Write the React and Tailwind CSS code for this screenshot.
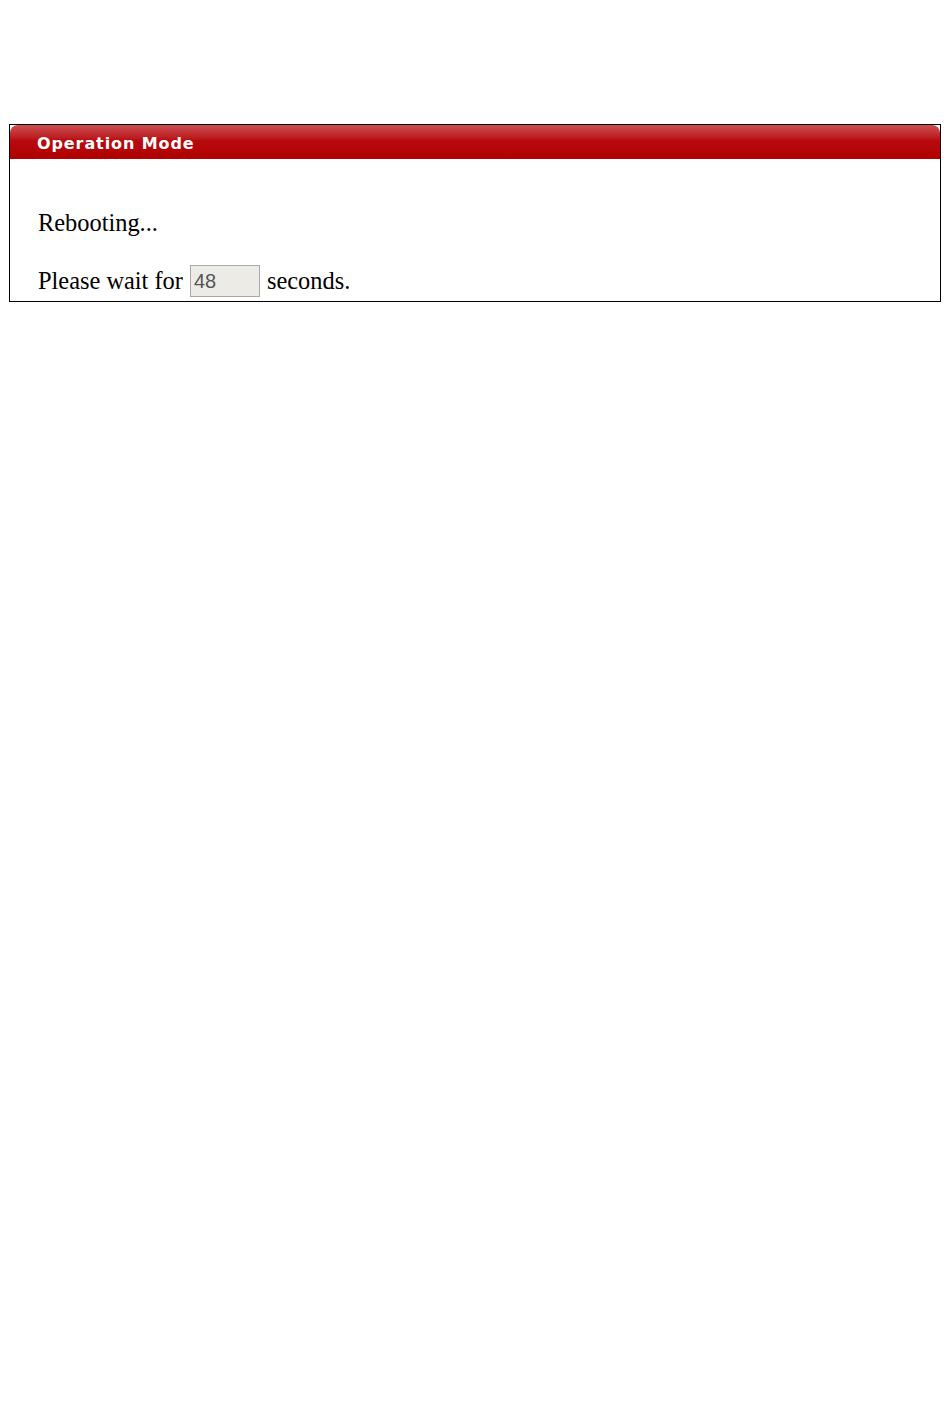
export default function App() {
  return (
    <div className="min-h-[1408px] bg-white pt-[124px] px-[9px]">
      <div className="w-[932px] border border-black">
        {/* Header bar */}
        <div className="h-[34px] rounded-t-[8px] bg-gradient-to-b from-[#cc4a52] via-[#b80a0f] via-45% to-[#b00000] pl-[27px] pt-[4px] flex items-center">
          <span className="text-white font-bold text-[16px] tracking-[0.9px] font-['DejaVu_Sans','Verdana',sans-serif]">
            Operation Mode
          </span>
        </div>

        {/* Body */}
        <div className="pl-[28px] pt-[50px] pb-[4px] font-['Liberation_Serif','Times_New_Roman',serif] text-[24.4px] text-black leading-[28px]">
          <p>Rebooting...</p>
          <p className="mt-[28px] flex items-center">
            <span>Please wait for</span>
            <input
              type="text"
              readOnly
              value="48"
              className="ml-[7px] mr-[7px] w-[70px] h-[32px] bg-[#ecebe6] border border-[#a9a9a9] px-[3px] text-[20px] text-[#555] font-['Liberation_Sans','Arial',sans-serif]"
            />
            <span>seconds.</span>
          </p>
        </div>
      </div>
    </div>
  );
}
